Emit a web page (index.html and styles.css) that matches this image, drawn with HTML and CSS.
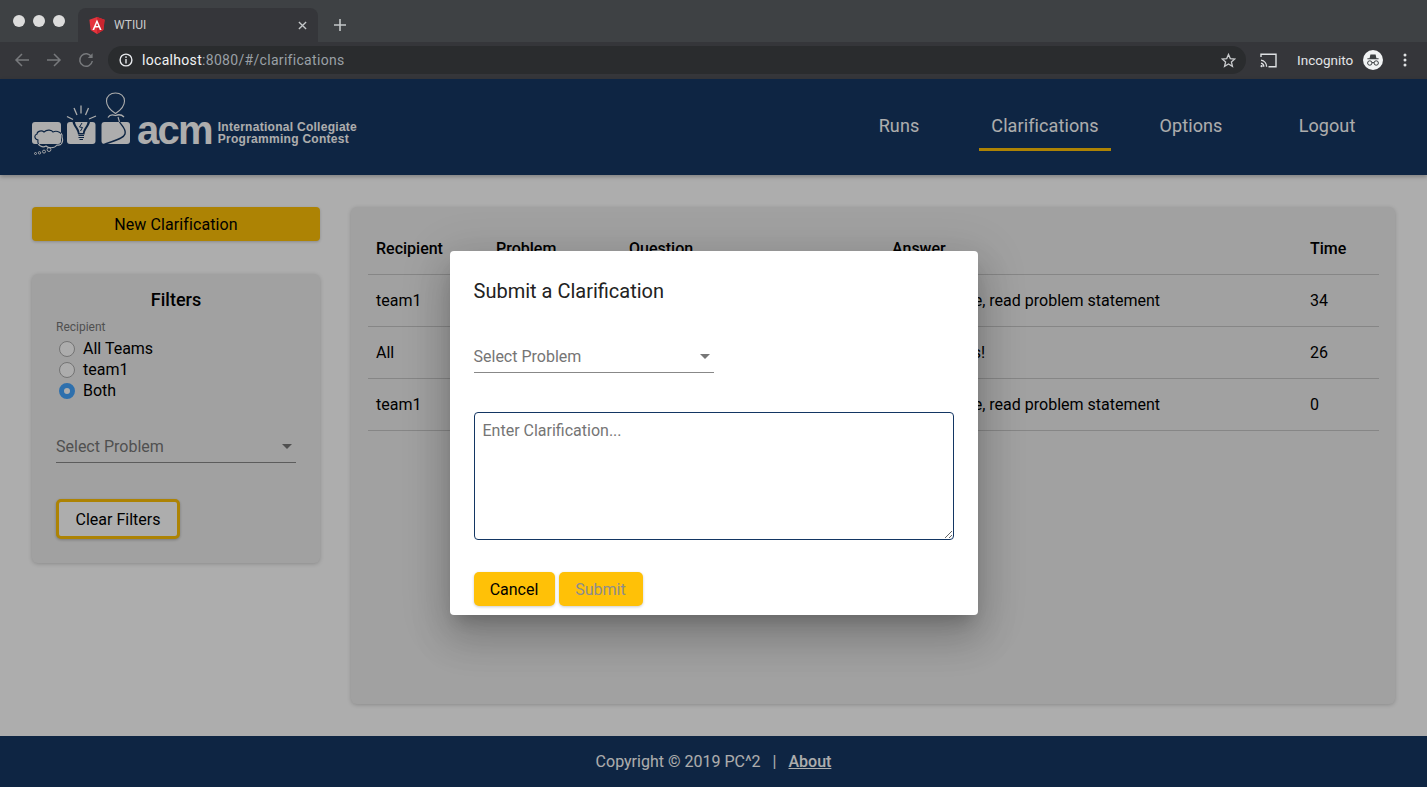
FILE: index.html

```html
<!DOCTYPE html>
<html lang="en">
<head>
  <meta charset="UTF-8">
  <title>WTIUI</title>
  <meta name="viewport" content="width=device-width, initial-scale=1">
  <link rel="stylesheet" href="styles.css">
</head>
<body>

<div class="browser">
  <div class="tabstrip">
    <div class="dots"><span></span><span></span><span></span></div>
    <div class="tab">
      <svg class="tab-icon" viewBox="0 0 16 17">
        <path d="M8 0 L15.6 2.7 L14.4 13 L8 17 L1.6 13 L.4 2.7 Z" fill="#e5343d"/>
        <path d="M8 0 L15.600 2.700 L14.400 13 L8 17 Z" fill="#c9252f"/>
        <path d="M8 2.400 L3.400 13 H5.200 L6.100 10.600 H9.900 L10.800 13 H12.600 Z M6.800 9.100 L8 6 L9.200 9.100 Z" fill="#fff"/>
      </svg>
      <span class="tab-title">WTIUI</span>
      <svg class="tab-close" viewBox="0 0 10 10"><path d="M1 1 L9 9 M9 1 L1 9" stroke="#c4c7c9" stroke-width="1.5"/></svg>
    </div>
    <svg class="tab-new" viewBox="0 0 12 12"><path d="M6 0 V12 M0 6 H12" stroke="#c4c7c9" stroke-width="1.6"/></svg>
  </div>
  <div class="toolbar">
    <svg class="tool" viewBox="0 0 16 16"><path d="M15 8 H2 M8 2 L2 8 L8 14" fill="none" stroke="#77797c" stroke-width="1.5"/></svg>
    <svg class="tool" viewBox="0 0 16 16"><path d="M1 8 H14 M8 2 L14 8 L8 14" fill="none" stroke="#77797c" stroke-width="1.5"/></svg>
    <svg class="tool" viewBox="0 0 16 16"><path d="M13.6 5 A6.3 6.3 0 1 0 14.3 9" fill="none" stroke="#77797c" stroke-width="1.5"/><path d="M14.6 1.2 V6 H9.8 Z" fill="#77797c"/></svg>
    <div class="omnibox">
      <svg class="omni-info" viewBox="0 0 14 14">
        <circle cx="7" cy="7" r="5.9" fill="none" stroke="#e8eaed" stroke-width="1.4"/>
        <path d="M7 6 V10.4" stroke="#e8eaed" stroke-width="1.4"/>
        <circle cx="7" cy="4.1" r=".9" fill="#e8eaed"/>
      </svg>
      <span class="url"><span class="url-host">localhost</span>:8080/#/clarifications</span>
      <svg class="omni-star" viewBox="0 0 16 16"><path d="M8 1.6 L9.9 6 L14.7 6.4 L11.1 9.5 L12.2 14.2 L8 11.7 L3.8 14.2 L4.9 9.5 L1.3 6.4 L6.1 6 Z" fill="none" stroke="#c9cbcd" stroke-width="1.4"/></svg>
    </div>
    <svg class="cast" viewBox="0 0 17 15">
      <path d="M1 4 V1.2 H16 V13.8 H8.5" fill="none" stroke="#dfe1e3" stroke-width="1.4"/>
      <path d="M1 7.2 A6.6 6.6 0 0 1 6.6 13.8 M1 10.2 A3.6 3.6 0 0 1 3.8 13.8" fill="none" stroke="#dfe1e3" stroke-width="1.3"/>
      <circle cx="1.6" cy="13.2" r="1.1" fill="#dfe1e3"/>
    </svg>
    <span class="incognito">Incognito</span>
    <svg class="incognito-icon" viewBox="0 0 20 20">
      <circle cx="10" cy="10" r="10" fill="#f1f3f4"/>
      <path d="M7.400 4.600 H12.600 L13.400 8.200 H15.600 V9.200 H4.400 V8.200 H6.600 Z" fill="#3c4043"/>
      <circle cx="6.800" cy="13" r="2.200" fill="none" stroke="#3c4043" stroke-width="1"/>
      <circle cx="13.200" cy="13" r="2.200" fill="none" stroke="#3c4043" stroke-width="1"/>
      <path d="M9 12.600 H11" stroke="#3c4043" stroke-width="1"/>
    </svg>
    <svg class="kebab" viewBox="0 0 4 14"><circle cx="2" cy="2" r="1.5" fill="#dfe1e3"/><circle cx="2" cy="7" r="1.5" fill="#dfe1e3"/><circle cx="2" cy="12" r="1.5" fill="#dfe1e3"/></svg>
  </div>
</div>

<div class="page">
  <header class="app-header">
    <div class="logo">
      <svg class="logo-art" viewBox="30 90 104 68">
        <defs>
          <clipPath id="inTile"><rect x="32" y="122" width="29" height="22"/></clipPath>
          <clipPath id="outTile"><path d="M30 144 H134 V158 H30 Z M61 118 H66 V144 H61 Z"/></clipPath>
        </defs>
        <!-- tiles -->
        <rect x="32" y="122" width="29" height="22" rx="3" fill="#fff"/>
        <rect x="67" y="122" width="28.500" height="22" rx="3" fill="#fff"/>
        <rect x="101.500" y="122" width="28.500" height="22" rx="3" fill="#fff"/>
        <!-- thought cloud -->
        <path id="cloud" clip-path="url(#inTile)" d="M38 140 C34 139 34 135 37 134 C37 131 42 130 44 132 C47 129 52 130 53 132 C57 130 63 133 62 137 C64 142 61 146 57 145 C54 149 48 148 46 146 C43 148 37 146 38 140 Z" fill="none" stroke="#133663" stroke-width="1.100"/>
        <path clip-path="url(#outTile)" d="M38 140 C34 139 34 135 37 134 C37 131 42 130 44 132 C47 129 52 130 53 132 C57 130 63 133 62 137 C64 142 61 146 57 145 C54 149 48 148 46 146 C43 148 37 146 38 140 Z" fill="none" stroke="#fff" stroke-width="1.100"/>
        <g fill="none" stroke="#fff" stroke-width=".9">
          <circle cx="35.500" cy="153.500" r="1"/>
          <circle cx="39.500" cy="152.800" r="1.200"/>
          <circle cx="44" cy="151.600" r="1.500"/>
          <circle cx="49" cy="149.600" r="1.900"/>
        </g>
        <!-- bulb -->
        <g stroke="#fff" stroke-width="1.300" fill="none">
          <path d="M67 116.500 L73 119.500"/>
          <path d="M74 108 L77 115"/>
          <path d="M81 105.500 V113.500"/>
          <path d="M88.500 108 L85.500 115"/>
          <path d="M96 116 L89 119"/>
        </g>
        <path d="M72.500 122 C73.500 127 77.500 129 78 134.500 H84.500 C85 129 89 127 90 122 Z" fill="#133663"/>
        <path d="M75 122 C75.500 126.500 79.500 128.500 79.500 133 H83 C83 128.500 87 126.500 87.500 122 Z" fill="#fff"/>
        <path d="M82 123 L79.500 127 L82.500 127.500 L80.500 131" fill="none" stroke="#133663" stroke-width="1"/>
        <path d="M78.500 135.500 H84 M78.500 137.500 H84 M79.500 139.500 H83" stroke="#133663" stroke-width="1.200"/>
        <!-- balloon -->
        <path d="M115.500 113.500 C110 110 106.500 105 106.500 101 C106.500 96 110.500 93 115.500 93 C120.500 93 124.500 96 124.500 101 C124.500 105 121 110 115.500 113.500 Z" fill="none" stroke="#fff" stroke-width="1.100"/>
        <path d="M108 117.500 C110 114 113 114.500 115.500 115.500 C118 114.500 121 114 124 117" fill="none" stroke="#fff" stroke-width="1.300"/>
        <path d="M118 117 L119.500 122" stroke="#fff" stroke-width="1.100"/>
        <path d="M119.500 122 C122 126 126.500 129 125 134 C123.500 139 112 141 103 145" fill="none" stroke="#133663" stroke-width="1.400"/>
      </svg>
      <span class="logo-acm">acm</span>
      <span class="logo-name">International Collegiate<br>Programming Contest</span>
    </div>
    <nav class="nav">
      <a class="nav-link">Runs</a>
      <a class="nav-link nav-link-active">Clarifications</a>
      <a class="nav-link">Options</a>
      <a class="nav-link nav-link-logout">Logout</a>
    </nav>
  </header>

  <main class="content">
    <aside class="sidebar">
      <button class="btn-new">New Clarification</button>
      <section class="filters">
        <h2 class="filters-title">Filters</h2>
        <div class="field-label">Recipient</div>
        <div class="radio-row"><span class="radio"></span>All Teams</div>
        <div class="radio-row"><span class="radio"></span>team1</div>
        <div class="radio-row"><span class="radio radio-on"></span>Both</div>
        <div class="select select-filter"><span>Select Problem</span><i class="caret"></i></div>
        <button class="btn-clear">Clear Filters</button>
      </section>
    </aside>

    <section class="table-card">
      <table class="runs">
        <colgroup>
          <col class="col-recipient"><col class="col-problem"><col class="col-question"><col class="col-answer"><col class="col-time">
        </colgroup>
        <thead>
          <tr><th>Recipient</th><th>Problem</th><th>Question</th><th>Answer</th><th>Time</th></tr>
        </thead>
        <tbody>
          <tr><td>team1</td><td></td><td></td><td>No response, read problem statement</td><td>34</td></tr>
          <tr><td>All</td><td></td><td></td><td>Yes, it works!</td><td>26</td></tr>
          <tr><td>team1</td><td></td><td></td><td>No response, read problem statement</td><td>0</td></tr>
        </tbody>
      </table>
    </section>
  </main>

  <footer class="app-footer">
    <span>Copyright © 2019 PC^2</span><span class="footer-sep">|</span><a class="footer-link">About</a>
  </footer>

  <div class="backdrop">
    <div class="dialog">
      <h1 class="dialog-title">Submit a Clarification</h1>
      <div class="select select-dialog"><span>Select Problem</span><i class="caret"></i></div>
      <textarea class="dialog-text" placeholder="Enter Clarification..."></textarea>
      <div class="dialog-actions">
        <button class="btn-amber btn-cancel">Cancel</button>
        <button class="btn-amber btn-submit">Submit</button>
      </div>
    </div>
  </div>
</div>

</body>
</html>
```

FILE: styles.css

```css
* { box-sizing: border-box; }
html, body { margin: 0; height: 100%; overflow: hidden; }
body { font-family: Roboto, "Liberation Sans", sans-serif; font-size: 16px; color: #000; background: #fff; display: flex; flex-direction: column; }

/* browser chrome */
.browser { height: 79px; flex: none; }
.tabstrip { height: 42px; background: #3e4144; display: flex; align-items: flex-end; }
.dots { width: 78px; height: 42px; display: flex; gap: 8px; padding: 15px 0 0 13px; }
.dots span { width: 12px; height: 12px; border-radius: 50%; background: #dcdcdc; }
.tab { width: 240px; height: 34px; background: #35363a; border-radius: 8px 8px 0 0; display: flex; align-items: center; padding-left: 11px; }
.tab-icon { width: 16px; height: 17px; flex: none; }
.tab-title { font-size: 12px; color: #c9cbcd; margin-left: 9px; flex: 1; }
.tab-close { width: 9px; height: 9px; margin-right: 11px; }
.tab-new { width: 12px; height: 12px; margin: 0 0 11px 16px; }
.toolbar { height: 37px; background: #35363a; display: flex; align-items: center; padding: 0 0 1px 14px; }
.tool { width: 16px; height: 16px; margin-right: 16px; flex: none; }
.omnibox { width: 1138px; height: 28px; margin-left: -2px; border-radius: 14px; background: #2a2c2e; display: flex; align-items: center; padding: 0 10px 0 11px; }
.omni-info { width: 14px; height: 14px; flex: none; }
.url { font-size: 14px; letter-spacing: .31px; color: #9aa0a6; margin-left: 9px; flex: 1; }
.url-host { color: #f1f3f4; }
.omni-star { width: 15px; height: 15px; }
.cast { width: 17px; height: 15px; margin-left: 14px; flex: none; }
.incognito { font-size: 13.5px; color: #e3e5e7; margin-left: 20px; width: 66px; }
.incognito-icon { width: 20px; height: 20px; flex: none; }
.kebab { width: 4px; height: 14px; margin-left: 20px; flex: none; }

/* page */
.page { flex: 1; position: relative; display: flex; flex-direction: column; min-height: 0; }
.app-header { height: 96px; flex: none; background: #153763; display: flex; justify-content: space-between; box-shadow: 0 2px 4px rgba(0,0,0,.25); position: relative; }
.logo { display: flex; align-items: flex-start; padding: 11px 0 0 30px; color: #fff; }
.logo-art { width: 104px; height: 68px; flex: none; }
.logo-acm { font-family: "Liberation Sans", sans-serif; font-weight: bold; font-size: 40px; line-height: 40px; letter-spacing: -1.8px; margin: 20px 0 0 3px; }
.logo-name { font-family: "Liberation Sans", sans-serif; font-weight: bold; font-size: 12px; line-height: 12px; letter-spacing: .28px; margin: 31px 0 0 6px; }
.nav { display: flex; gap: 20px; padding-right: 44px; }
.nav-link { width: 120px; height: 72px; font-size: 18px; letter-spacing: .1px; line-height: 94px; text-align: center; color: #fff; }
.nav-link-active { width: 132px; border-bottom: 3px solid #ffc107; }
.nav-link-logout { width: 112px; }

.content { flex: 1; display: flex; gap: 31px; padding: 32px; min-height: 0; }
.sidebar { width: 288px; flex: none; }
.btn-new { width: 100%; height: 34px; border: 0; border-radius: 4px; background: #ffc107; font: 16px Roboto, sans-serif; letter-spacing: .1px; box-shadow: 0 1px 3px rgba(0,0,0,.2); }
.filters { margin-top: 33px; padding: 13px 24px 24px; background: #eee; border-radius: 6px; box-shadow: 0 1px 4px rgba(0,0,0,.2); }
.filters-title { margin: 0; font-size: 18px; font-weight: 500; line-height: 26px; text-align: center; }
.field-label { margin-top: 7px; height: 18px; font-size: 12px; line-height: 14px; color: #777; }
.radio-row { height: 21px; display: flex; align-items: center; gap: 8px; padding-left: 3px; line-height: 21px; }
.radio { width: 16px; height: 16px; border-radius: 50%; border: 1px solid #aaa; background: #fff; }
.radio-on { border: 5px solid #44a5ff; }
.select { display: flex; justify-content: space-between; align-items: center; height: 25px; padding-bottom: 7px; border-bottom: 1px solid #888; color: #777; line-height: 16px; }
.select-filter { margin-top: 37px; padding-right: 4px; }
.select-dialog { width: 240px; margin-top: 43px; padding-right: 4px; color: #757575; }
.caret { width: 0; height: 0; border-left: 5px solid transparent; border-right: 5px solid transparent; border-top: 5px solid #777; }
.btn-clear { display: block; width: 124px; height: 40px; margin-top: 36px; border: 3px solid #ffc107; border-radius: 5px; background: #fff; font: 16px Roboto, sans-serif; box-shadow: 0 1px 3px rgba(0,0,0,.25); }

.table-card { flex: 1; padding: 16px 16px 0 17px; background: #eee; border-radius: 6px; box-shadow: 0 1px 4px rgba(0,0,0,.2); }
.runs { width: 1011px; table-layout: fixed; border-collapse: separate; border-spacing: 0; }
.col-recipient { width: 120px; }
.col-problem { width: 133px; }
.col-question { width: 263px; }
.col-answer { width: 418px; }
.col-time { width: 77px; }
.runs th, .runs td { height: 52px; padding: 0 8px; text-align: left; white-space: nowrap; border-bottom: 1px solid #c6c6c6; }
.runs th { font-weight: 500; }

.app-footer { height: 51px; flex: none; background: #153763; color: #fff; display: flex; justify-content: center; align-items: center; }
.footer-sep { margin: 0 12px; }
.footer-link { font-weight: 500; text-decoration: underline; }

/* modal */
.backdrop { position: absolute; inset: 0; background: rgba(0,0,0,.32); display: flex; justify-content: center; align-items: center; }
.dialog { width: 528px; height: 364px; padding: 26px 24px 0; background: #fff; border-radius: 4px; box-shadow: 0 11px 15px -7px rgba(0,0,0,.2), 0 24px 38px 3px rgba(0,0,0,.14), 0 9px 46px 8px rgba(0,0,0,.12); }
.dialog-title { margin: 0; font-size: 20px; font-weight: 400; line-height: 28px; color: #222; }
.dialog-text { display: block; width: 480px; height: 128px; margin-top: 39px; padding: 8px; border: 1px solid #133663; border-radius: 4px; font: 16px Roboto, sans-serif; outline: none; }
.dialog-text::placeholder { color: #757575; }
.dialog-actions { display: flex; gap: 4px; margin-top: 32px; }
.btn-amber { height: 34px; border: 0; border-radius: 5px; background: #ffc107; font: 16px Roboto, sans-serif; box-shadow: 0 1px 3px rgba(0,0,0,.2); }
.btn-cancel { width: 81px; }
.btn-submit { width: 84px; color: #8d8d8d; }
```
